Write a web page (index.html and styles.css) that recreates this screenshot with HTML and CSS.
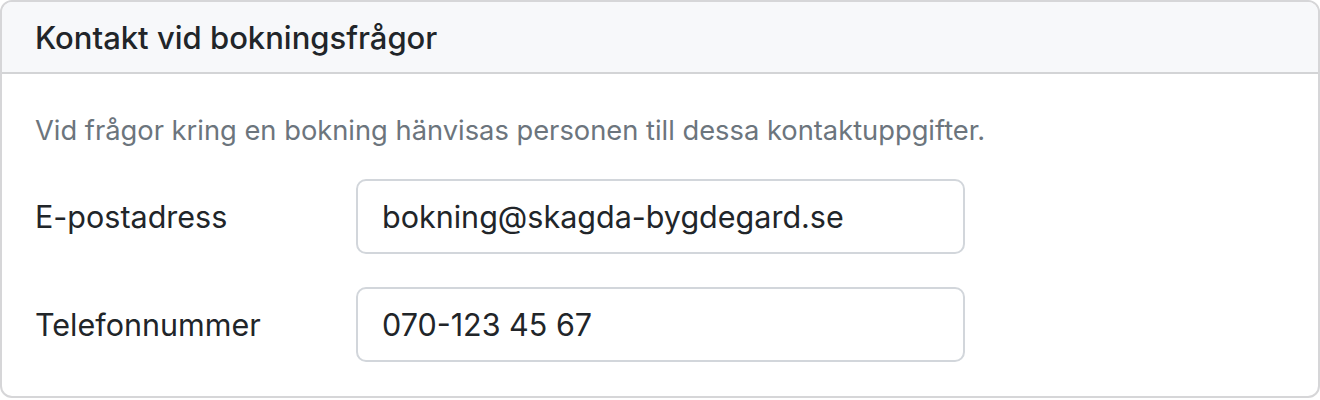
FILE: index.html
```html
<!doctype html>
<html lang="sv">
  <head>
    <meta charset="UTF-8" />
    <meta name="viewport" content="width=device-width, initial-scale=1.0" />
    <title>Kontakt vid bokningsfrågor</title>
    <link rel="stylesheet" href="styles.css">
  </head>
  <body>
    <div class="card">
      <div class="card-header">Kontakt vid bokningsfrågor</div>
      <div class="card-body">
        <p class="hint">Vid frågor kring en bokning hänvisas personen till dessa kontaktuppgifter.</p>
        <div class="field">
          <label for="email">E-postadress</label>
          <input id="email" type="email" value="bokning@skagda-bygdegard.se" />
        </div>
        <div class="field">
          <label for="phone">Telefonnummer</label>
          <input id="phone" type="tel" value="070-123 45 67" />
        </div>
      </div>
    </div>
  </body>
</html>
```

FILE: styles.css
```css
body {
  margin: 0;
  font-family: "Inter", "Liberation Sans", sans-serif;
  color: #212529;
  background: #fff;
}

.card {
  box-sizing: border-box;
  width: 1320px;
  border: 2px solid #d6d6d8;
  border-radius: 12px;
  overflow: hidden;
}

.card-header {
  height: 70px;
  display: flex;
  align-items: center;
  padding: 0 33px;
  background: #f7f8fa;
  border-bottom: 2px solid #d3d4d6;
  font-size: 31px;
  font-weight: 500;
}

.card-body {
  padding: 40px 33px 34px;
}

.hint {
  margin: 0 0 32px;
  font-size: 27.3px;
  line-height: 33px;
  color: #6c757d;
}

.field {
  display: grid;
  grid-template-columns: 321px 609px;
  align-items: center;
}

.field + .field {
  margin-top: 33px;
}

.field label {
  font-size: 30.5px;
}

.field input {
  box-sizing: border-box;
  height: 75px;
  padding: 0 24px;
  border: 2px solid #d2d6db;
  border-radius: 10px;
  font-family: inherit;
  font-size: 30.5px;
  color: #212529;
  background: #fff;
  outline: none;
}
```
